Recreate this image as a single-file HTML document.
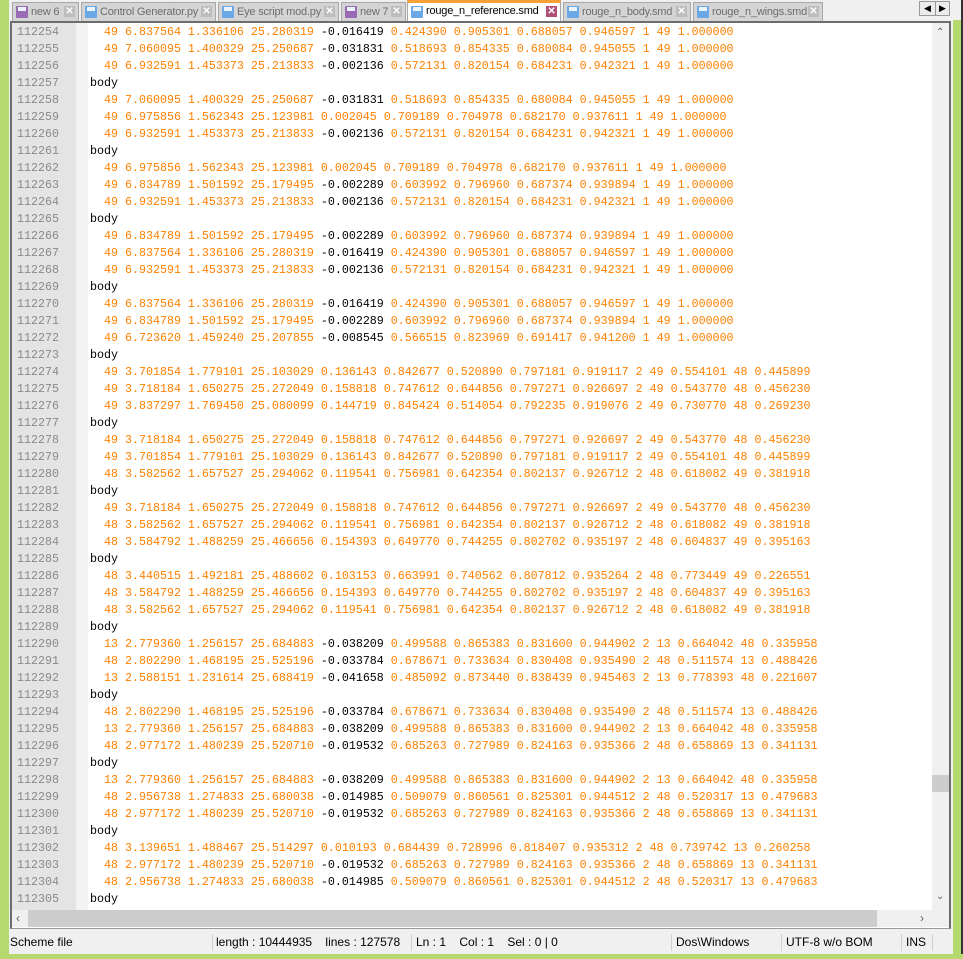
<!DOCTYPE html>
<html><head><meta charset="utf-8"><style>
*{margin:0;padding:0;box-sizing:border-box}
body{width:963px;height:959px;overflow:hidden;background:#f0f0f0;position:relative;font-family:"Liberation Sans",sans-serif}
.g{position:absolute;background:#b5d86f}
.tab{position:absolute;top:2px;height:19px;background:#d4d4d4;border:1px solid #a8a8a8;border-bottom:none;color:#6d6d6d;font-size:11px;letter-spacing:-0.2px;line-height:18px;padding-left:18px;white-space:nowrap;overflow:hidden}
.tab .ic{position:absolute;left:3px;top:3px;width:12px;height:12px;border-radius:1px;background:#6aa8e8}
.tab .ic:after{content:"";position:absolute;left:2px;top:1px;width:8px;height:4px;background:#eaf2fc}
.tab .x{position:absolute;right:3px;top:3px;width:11px;height:11px;background:#bdbdbd;color:#fff;font-size:10px;line-height:11px;text-align:center;font-weight:bold;z-index:2}
.tab.p .ic{background:#9a6bb5}
.tab.a{background:#fff;color:#000;top:0;height:22px;border-top:3px solid #f7a035;line-height:17px}
.tab.a .x{background:#b2507a}
.tab.a .ic{background:#6aa8e8}
#ed{position:absolute;left:10px;top:21px;width:941px;height:908px;border:2px solid #6d6d6d;border-bottom:1px solid #999;background:#fff;overflow:hidden}
#gut{position:absolute;left:0;top:0;width:64px;height:887px;background:#e4e4e4}
#fold{position:absolute;left:64px;top:0;width:12px;height:887px;background:#f3f3f3}
pre{position:absolute;top:1px;font-family:"Liberation Mono",monospace;font-size:11.67px;line-height:17px;white-space:pre}
#ln{left:5px;color:#8a8a8a}
#tx{left:78px;color:#ff8000}
#tx b{font-weight:normal;color:#000}
#vs{position:absolute;left:920px;top:0;width:17px;height:887px;background:#f0f0f0}
#hs{position:absolute;left:0;top:887px;width:937px;height:17px;background:#f0f0f0}
#st{position:absolute;left:10px;top:931px;width:941px;height:23px;font-size:12px;line-height:23px;color:#000}
#st span{position:absolute;top:0}
#st i{position:absolute;top:3px;width:1px;height:17px;background:#d0d0d0}
</style></head><body>
<div class="g" style="left:0;top:0;width:9px;height:959px"></div>
<div class="g" style="left:953px;top:20px;width:8px;height:939px"></div>
<div style="position:absolute;left:961px;top:0;width:2px;height:959px;background:#333"></div>
<div class="g" style="left:0;top:954px;width:963px;height:5px"></div>

<div class="tab p" style="left:12px;width:67px"><span class="ic"></span>new 6<span class="x">✕</span></div>
<div class="tab" style="left:81px;width:135px"><span class="ic"></span>Control Generator.py<span class="x">✕</span></div>
<div class="tab" style="left:218px;width:121px"><span class="ic"></span>Eye script mod.py<span class="x">✕</span></div>
<div class="tab p" style="left:341px;width:65px"><span class="ic"></span>new 7<span class="x">✕</span></div>
<div class="tab a" style="left:407px;width:154px"><span class="ic"></span>rouge_n_reference.smd<span class="x">✕</span></div>
<div class="tab" style="left:563px;width:128px"><span class="ic"></span>rouge_n_body.smd<span class="x">✕</span></div>
<div class="tab" style="left:693px;width:130px"><span class="ic"></span>rouge_n_wings.smd<span class="x">✕</span></div>
<div style="position:absolute;left:919px;top:1px;width:31px;height:15px;border:1px solid #999;background:#ececec;font-size:9px;line-height:13px;color:#000"><span style="position:absolute;left:4px">◀</span><span style="position:absolute;left:15px;top:0;width:1px;height:13px;background:#999"></span><span style="position:absolute;left:19px">▶</span></div>

<div id="ed">
<div id="gut"></div><div id="fold"></div>
<pre id="ln">112254
112255
112256
112257
112258
112259
112260
112261
112262
112263
112264
112265
112266
112267
112268
112269
112270
112271
112272
112273
112274
112275
112276
112277
112278
112279
112280
112281
112282
112283
112284
112285
112286
112287
112288
112289
112290
112291
112292
112293
112294
112295
112296
112297
112298
112299
112300
112301
112302
112303
112304
112305</pre>
<pre id="tx">  49 6.837564 1.336106 25.280319 <b>-0.016419</b> 0.424390 0.905301 0.688057 0.946597 1 49 1.000000
  49 7.060095 1.400329 25.250687 <b>-0.031831</b> 0.518693 0.854335 0.680084 0.945055 1 49 1.000000
  49 6.932591 1.453373 25.213833 <b>-0.002136</b> 0.572131 0.820154 0.684231 0.942321 1 49 1.000000
<b>body</b>
  49 7.060095 1.400329 25.250687 <b>-0.031831</b> 0.518693 0.854335 0.680084 0.945055 1 49 1.000000
  49 6.975856 1.562343 25.123981 0.002045 0.709189 0.704978 0.682170 0.937611 1 49 1.000000
  49 6.932591 1.453373 25.213833 <b>-0.002136</b> 0.572131 0.820154 0.684231 0.942321 1 49 1.000000
<b>body</b>
  49 6.975856 1.562343 25.123981 0.002045 0.709189 0.704978 0.682170 0.937611 1 49 1.000000
  49 6.834789 1.501592 25.179495 <b>-0.002289</b> 0.603992 0.796960 0.687374 0.939894 1 49 1.000000
  49 6.932591 1.453373 25.213833 <b>-0.002136</b> 0.572131 0.820154 0.684231 0.942321 1 49 1.000000
<b>body</b>
  49 6.834789 1.501592 25.179495 <b>-0.002289</b> 0.603992 0.796960 0.687374 0.939894 1 49 1.000000
  49 6.837564 1.336106 25.280319 <b>-0.016419</b> 0.424390 0.905301 0.688057 0.946597 1 49 1.000000
  49 6.932591 1.453373 25.213833 <b>-0.002136</b> 0.572131 0.820154 0.684231 0.942321 1 49 1.000000
<b>body</b>
  49 6.837564 1.336106 25.280319 <b>-0.016419</b> 0.424390 0.905301 0.688057 0.946597 1 49 1.000000
  49 6.834789 1.501592 25.179495 <b>-0.002289</b> 0.603992 0.796960 0.687374 0.939894 1 49 1.000000
  49 6.723620 1.459240 25.207855 <b>-0.008545</b> 0.566515 0.823969 0.691417 0.941200 1 49 1.000000
<b>body</b>
  49 3.701854 1.779101 25.103029 0.136143 0.842677 0.520890 0.797181 0.919117 2 49 0.554101 48 0.445899
  49 3.718184 1.650275 25.272049 0.158818 0.747612 0.644856 0.797271 0.926697 2 49 0.543770 48 0.456230
  49 3.837297 1.769450 25.080099 0.144719 0.845424 0.514054 0.792235 0.919076 2 49 0.730770 48 0.269230
<b>body</b>
  49 3.718184 1.650275 25.272049 0.158818 0.747612 0.644856 0.797271 0.926697 2 49 0.543770 48 0.456230
  49 3.701854 1.779101 25.103029 0.136143 0.842677 0.520890 0.797181 0.919117 2 49 0.554101 48 0.445899
  48 3.582562 1.657527 25.294062 0.119541 0.756981 0.642354 0.802137 0.926712 2 48 0.618082 49 0.381918
<b>body</b>
  49 3.718184 1.650275 25.272049 0.158818 0.747612 0.644856 0.797271 0.926697 2 49 0.543770 48 0.456230
  48 3.582562 1.657527 25.294062 0.119541 0.756981 0.642354 0.802137 0.926712 2 48 0.618082 49 0.381918
  48 3.584792 1.488259 25.466656 0.154393 0.649770 0.744255 0.802702 0.935197 2 48 0.604837 49 0.395163
<b>body</b>
  48 3.440515 1.492181 25.488602 0.103153 0.663991 0.740562 0.807812 0.935264 2 48 0.773449 49 0.226551
  48 3.584792 1.488259 25.466656 0.154393 0.649770 0.744255 0.802702 0.935197 2 48 0.604837 49 0.395163
  48 3.582562 1.657527 25.294062 0.119541 0.756981 0.642354 0.802137 0.926712 2 48 0.618082 49 0.381918
<b>body</b>
  13 2.779360 1.256157 25.684883 <b>-0.038209</b> 0.499588 0.865383 0.831600 0.944902 2 13 0.664042 48 0.335958
  48 2.802290 1.468195 25.525196 <b>-0.033784</b> 0.678671 0.733634 0.830408 0.935490 2 48 0.511574 13 0.488426
  13 2.588151 1.231614 25.688419 <b>-0.041658</b> 0.485092 0.873440 0.838439 0.945463 2 13 0.778393 48 0.221607
<b>body</b>
  48 2.802290 1.468195 25.525196 <b>-0.033784</b> 0.678671 0.733634 0.830408 0.935490 2 48 0.511574 13 0.488426
  13 2.779360 1.256157 25.684883 <b>-0.038209</b> 0.499588 0.865383 0.831600 0.944902 2 13 0.664042 48 0.335958
  48 2.977172 1.480239 25.520710 <b>-0.019532</b> 0.685263 0.727989 0.824163 0.935366 2 48 0.658869 13 0.341131
<b>body</b>
  13 2.779360 1.256157 25.684883 <b>-0.038209</b> 0.499588 0.865383 0.831600 0.944902 2 13 0.664042 48 0.335958
  48 2.956738 1.274833 25.680038 <b>-0.014985</b> 0.509079 0.860561 0.825301 0.944512 2 48 0.520317 13 0.479683
  48 2.977172 1.480239 25.520710 <b>-0.019532</b> 0.685263 0.727989 0.824163 0.935366 2 48 0.658869 13 0.341131
<b>body</b>
  48 3.139651 1.488467 25.514297 0.010193 0.684439 0.728996 0.818407 0.935312 2 48 0.739742 13 0.260258
  48 2.977172 1.480239 25.520710 <b>-0.019532</b> 0.685263 0.727989 0.824163 0.935366 2 48 0.658869 13 0.341131
  48 2.956738 1.274833 25.680038 <b>-0.014985</b> 0.509079 0.860561 0.825301 0.944512 2 48 0.520317 13 0.479683
<b>body</b></pre>
<div id="vs">
<div style="position:absolute;left:4px;top:4px;font-size:10px;color:#606060">&#8963;</div>
<div style="position:absolute;left:0;top:752px;width:17px;height:17px;background:#cdcdcd"></div>
<div style="position:absolute;left:4px;top:868px;font-size:10px;color:#606060">&#8964;</div>
</div>
<div id="hs">
<div style="position:absolute;left:16px;top:0;width:849px;height:17px;background:#cdcdcd"></div>
<div style="position:absolute;left:4px;top:1px;font-size:12px;color:#606060">&#8249;</div>
<div style="position:absolute;left:908px;top:1px;font-size:12px;color:#606060">&#8250;</div>
</div>
</div>

<div id="st">
<span style="left:0">Scheme file</span>
<i style="left:202px"></i><span style="left:206px">length : 10444935&nbsp;&nbsp;&nbsp; lines : 127578</span>
<i style="left:401px"></i><span style="left:406px">Ln : 1&nbsp;&nbsp;&nbsp; Col : 1&nbsp;&nbsp;&nbsp; Sel : 0 | 0</span>
<i style="left:661px"></i><span style="left:666px">Dos\Windows</span>
<i style="left:771px"></i><span style="left:776px">UTF-8 w/o BOM</span>
<i style="left:891px"></i><span style="left:896px">INS</span>
<i style="left:922px"></i>
</div>
</body></html>
